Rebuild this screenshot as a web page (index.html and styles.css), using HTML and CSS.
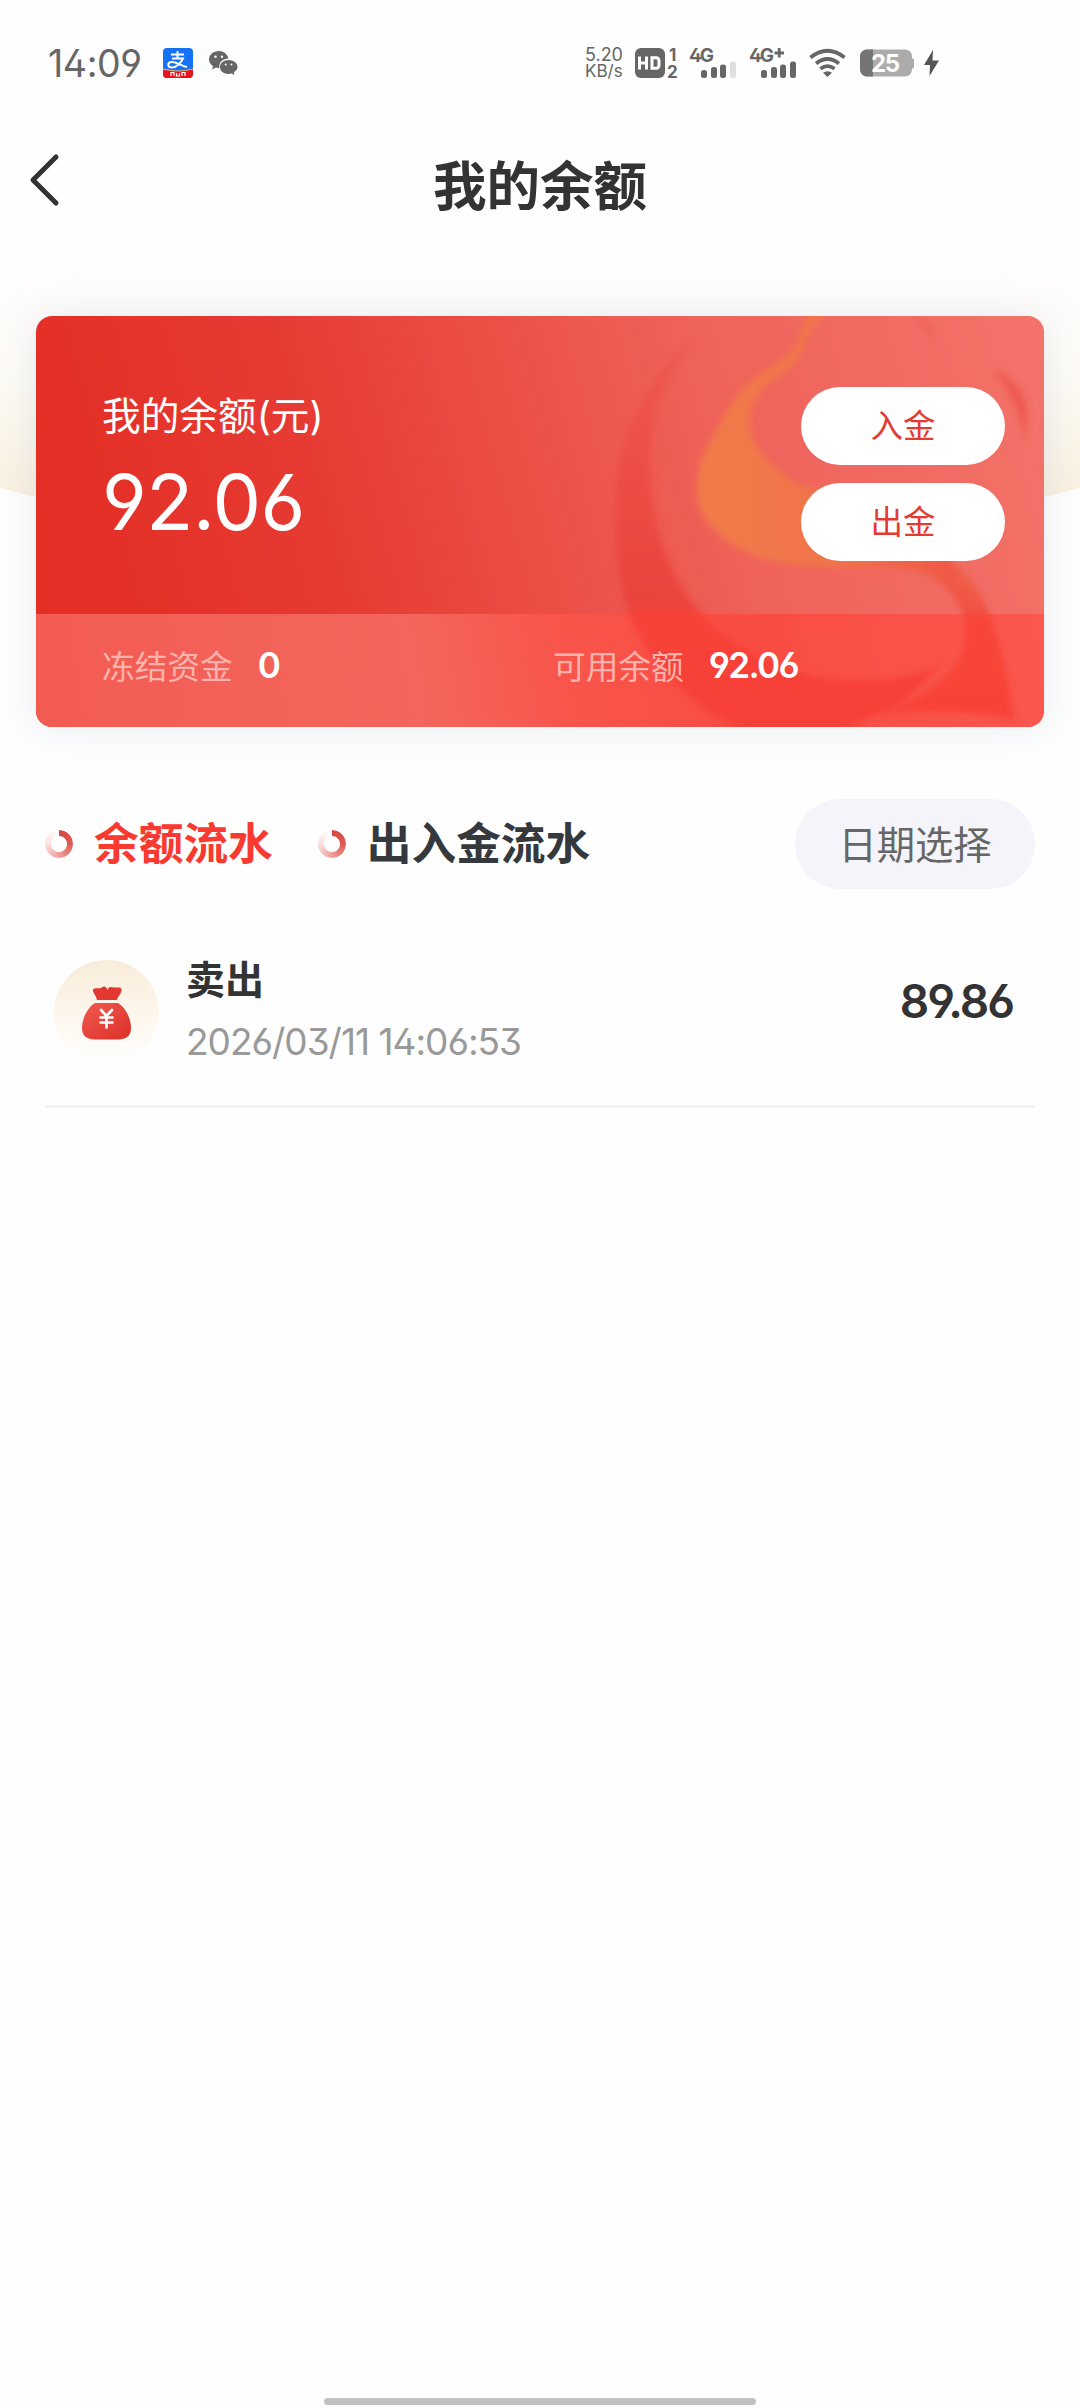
FILE: index.html
```html
<!DOCTYPE html>
<html lang="zh-CN">
<head>
    <meta charset="UTF-8">
    <meta name="viewport" content="width=device-width, initial-scale=1.0">
    <title>我的余额</title>
    <link rel="stylesheet" href="styles.css">
</head>
<body>
<div class="status-bar">
    <span class="clock">14:09</span>
    <svg class="app-pay" width="30" height="30" viewBox="0 0 30 30">
        <rect width="30" height="30" rx="4" fill="#1672f3"/>
        <path d="M0 21Q15 25 30 21V26a4 4 0 0 1-4 4H4a4 4 0 0 1-4-4z" fill="#e8141c"/>
        <path d="M0 21Q15 25 30 21" fill="none" stroke="#f5b06a" stroke-width="1"/>
        <path d="M8 6.500H21M14.500 3V10.500M9 10.500H20C18 15 13 19.500 9 19.500C4 19.500 4 14 9 14C14 14 18 18 24 19" fill="none" stroke="#fff" stroke-width="1.900"/>
        <path d="M8 28v-3.500h3V28M13.500 25v3h3v-3M19 28v-3.500h3V28" fill="none" stroke="#fff" stroke-width="1.200"/>
    </svg>
    <svg class="app-chat" width="29" height="24" viewBox="0 0 29 24">
        <path d="M10 0C4 0 0 3.800 0 8.500c0 2.800 1.500 5 4 6.600L3.200 18.500 7 16.500c1.200.300 2 .400 3.500.400C9.500 11 14 7.500 19.500 7.500 18.500 3 14.500 0 10 0z" fill="#666"/>
        <path d="M19.500 9C14.500 9 11 12 11 16s3.500 7 8.500 7c1 0 2-.200 3-.500l3 1.500-.700-2.800C27 20 28.500 18 28.500 16c0-4-4-7-9-7z" fill="#666"/>
        <g fill="#fff"><circle cx="6.500" cy="5.700" r="1.200"/><circle cx="13" cy="5.700" r="1.200"/><circle cx="16.700" cy="13.500" r="1"/><circle cx="22.500" cy="13.500" r="1"/></g>
    </svg>
    <div class="status-right">
        <div class="speed"><span>5.20</span><span>KB/s</span></div>
        <svg class="hd" width="43" height="30" viewBox="0 0 43 30">
            <rect width="30" height="30" rx="6" fill="#666"/>
            <path d="M4.500 8.500V21.500M11.500 8.500V21.500M4.500 15H11.500M17 9.700H21Q24 9.700 24 13V17Q24 20.300 21 20.300H17Z" fill="none" stroke="#fff" stroke-width="3"/>
            <text x="34" y="12.500" font-size="17">1</text>
            <text x="32" y="30" font-size="17">2</text>
        </svg>
        <svg class="signal" width="49" height="30" viewBox="0 0 49 30">
            <text x="0" y="14" font-size="19" textLength="25">4G</text>
            <rect x="12" y="22" width="6" height="8" rx="2.500"/>
            <rect x="22" y="19" width="6" height="11" rx="2.500"/>
            <rect x="31" y="16.500" width="6" height="13.500" rx="2.500"/>
            <rect x="41" y="13.500" width="6" height="16.500" rx="2.500" opacity=".2"/>
        </svg>
        <svg class="signal signal-plus" width="49" height="30" viewBox="0 0 49 30">
            <text x="0" y="14" font-size="19" textLength="25">4G</text>
            <path d="M25.500 5H35M30.200 0V9.500" stroke="#666" stroke-width="2.800"/>
            <rect x="12" y="22" width="6" height="8" rx="2.500"/>
            <rect x="22" y="19" width="6" height="11" rx="2.500"/>
            <rect x="31" y="16.500" width="6" height="13.500" rx="2.500"/>
            <rect x="41" y="13.500" width="6" height="16.500" rx="2.500"/>
        </svg>
        <svg class="wifi" width="37" height="28" viewBox="0 0 37 28">
            <path d="M1.500 8.500Q18.500-5 35.500 8.500M7 14.500Q18.500 5.500 30 14.500M11.500 19.800Q18.500 14.500 25.500 19.800" fill="none" stroke="#666" stroke-width="3.800"/>
            <path d="M14 23.800Q18.500 20.500 23 23.800L18.500 28z" fill="#666"/>
        </svg>
        <svg class="battery" width="54" height="28" viewBox="0 0 54 28">
            <rect x="0" y="0.500" width="52" height="27" rx="7" fill="#acacac"/>
            <path d="M7 .5H13V27.500H7A7 7 0 0 1 0 20.500V7.500A7 7 0 0 1 7 .5z" fill="#747474"/>
            <rect x="50" y="9.500" width="4" height="10" rx="1.500" fill="#acacac"/>
            <text x="11" y="22.500" font-size="24" textLength="29">25</text>
        </svg>
        <svg class="bolt" width="15" height="26" viewBox="0 0 15 26">
            <path d="M9 0L0 15H6L5.500 26 15 10.500H8.500z" fill="#555"/>
        </svg>
    </div>
</div>

<header class="nav">
    <svg class="back" width="32" height="54" viewBox="0 0 32 54">
        <path d="M27 4L4 27L27 50" fill="none" stroke="#333" stroke-width="5" stroke-linecap="round" stroke-linejoin="round"/>
    </svg>
    <h1>我的余额</h1>
</header>

<main>
    <svg class="arc" width="1080" height="300" viewBox="0 0 1080 300">
        <defs>
            <linearGradient id="cream" x1="0" y1="0" x2="0" y2="1">
                <stop offset="0" stop-color="#fefefe"/>
                <stop offset=".4" stop-color="#fefbf6"/>
                <stop offset="1" stop-color="#f6ead3"/>
            </linearGradient>
        </defs>
        <path d="M0 0H1080V228Q540 370 0 228z" fill="url(#cream)"/>
    </svg>

    <section class="card">
        <svg class="ribbon" width="1008" height="411" viewBox="36 316 1008 411">
            <defs>
                <linearGradient id="crescent" x1="0" y1="330" x2="0" y2="720" gradientUnits="userSpaceOnUse">
                    <stop offset="0" stop-color="#ec4f49" stop-opacity=".3"/>
                    <stop offset=".35" stop-color="#ec4c46" stop-opacity=".85"/>
                    <stop offset=".7" stop-color="#ea423c" stop-opacity=".9"/>
                    <stop offset=".74" stop-color="#f84238"/>
                    <stop offset="1" stop-color="#f64137"/>
                </linearGradient>
                <linearGradient id="tail" x1="0" y1="540" x2="0" y2="727" gradientUnits="userSpaceOnUse">
                    <stop offset="0" stop-color="#f06a49"/>
                    <stop offset=".38" stop-color="#f05244"/>
                    <stop offset=".42" stop-color="#f84539"/>
                    <stop offset="1" stop-color="#f84338"/>
                </linearGradient>
                <linearGradient id="orange" x1="700" y1="0" x2="970" y2="0" gradientUnits="userSpaceOnUse">
                    <stop offset="0" stop-color="#f17a49"/>
                    <stop offset=".5" stop-color="#f07448"/>
                    <stop offset="1" stop-color="#f05245"/>
                </linearGradient>
                <filter id="soft"><feGaussianBlur stdDeviation="3"/></filter>
            </defs>
            <g filter="url(#soft)">
                <path d="M698 333C664 361 640 397 627 434C612 478 612 540 621 585C630 640 680 707 750 732H840L905 700L945 660C925 678 865 687 815 677C760 662 715 636 687 595C659 553 642 490 654 420C660 390 678 360 698 333z" fill="url(#crescent)"/>
                <path d="M815 565H957C975 583 988 603 995 632C1005 663 1011 692 1015 722C990 712 940 708 865 715C930 702 963 670 966 635C965 602 945 575 902 568z" fill="url(#tail)"/>
                <path d="M806 314C801 335 796 350 782 359C745 383 735 393 720 424C704 448 695 470 697 495C700 525 730 550 770 561C810 570 860 567 902 567C930 568 955 580 962 600L950 555L809 487C785 480 767 462 755 443C745 418 751 400 767 385C794 365 797 366 804 345C809 333 815 325 827 314z" fill="url(#orange)"/>
                <path d="M992 368Q1024 382 1027 410L1025 445Q1021 405 992 368z" fill="#ed4e48" opacity=".7"/>
                <path d="M915 317Q930 321 938 341Q927 331 915 317z" fill="#ee574f" opacity=".7"/>
            </g>
        </svg>
        <div class="card-top">
            <div class="balance">
                <div class="label">我的余额(元)</div>
                <div class="amount">92.06</div>
            </div>
            <div class="actions">
                <button type="button">入金</button>
                <button type="button">出金</button>
            </div>
        </div>
        <div class="card-bottom">
            <div class="fund"><span>冻结资金</span><b>0</b></div>
            <div class="fund"><span>可用余额</span><b>92.06</b></div>
        </div>
    </section>

    <div class="tabs">
        <div class="tab active"><i class="ring"></i>余额流水</div>
        <div class="tab"><i class="ring"></i>出入金流水</div>
        <button type="button" class="date-btn">日期选择</button>
    </div>

    <div class="record">
        <div class="record-icon">
            <svg width="50" height="54" viewBox="0 0 50 54">
                <defs>
                    <linearGradient id="bag" x1="0" y1="0" x2="1" y2="1">
                        <stop offset="0" stop-color="#f05a50"/>
                        <stop offset="1" stop-color="#dd2f28"/>
                    </linearGradient>
                </defs>
                <path d="M15 14C14 9 10 6 11 3.500C13 1 17 3 19 2C22-.5 24 0 25.500 4C27 0 29 1 32 1.500C35 2 39 0 39.500 3.500C40 7 36 10 35 14z" fill="#e3372f"/>
                <path d="M13 17H36C44 22 49 33 49 42C49 50 44 53.500 36 53.500H13C5 53.500 0 50 0 42C0 33 5 22 13 17z" fill="url(#bag)"/>
                <path d="M19 24L24.500 30L30 24M24.500 30V41.500M18.500 31.500H30.500M18.500 36.500H30.500" fill="none" stroke="#fff" stroke-width="2.600" stroke-linecap="round"/>
            </svg>
        </div>
        <div class="record-info">
            <div class="record-name">卖出</div>
            <div class="record-time">2026/03/11 14:06:53</div>
        </div>
        <div class="record-amount">89.86</div>
    </div>
</main>

<div class="home-bar"></div>
</body>
</html>
```
FILE: styles.css
```css
* {
    box-sizing: border-box;
}
body {
    margin: 0;
    width: 1080px;
    height: 2408px;
    background: #fefefe;
    font-family: Inter, "Noto Sans CJK SC", sans-serif;
    font-feature-settings: "ss01";
    color: #333;
    display: flex;
    flex-direction: column;
    overflow: hidden;
}
svg {
    display: block;
    flex: none;
    overflow: visible;
}
button {
    border: none;
    padding: 0;
    font-family: inherit;
}

/* status bar */
.status-bar {
    height: 126px;
    padding: 0 141px 0 48px;
    display: flex;
    align-items: center;
    color: #666;
}
.clock {
    width: 115px;
    font-size: 37.5px;
    letter-spacing: -0.4px;
}
.app-pay {
    margin-right: 16px;
}
.status-right {
    margin-left: auto;
    display: flex;
    align-items: center;
}
.status-right text {
    font-weight: 700;
    fill: #666;
}
.status-right .battery text {
    fill: #fff;
}
.speed {
    width: 50px;
    display: flex;
    flex-direction: column;
    font-size: 17px;
    line-height: 17px;
}
.speed span:first-child {
    font-size: 18px;
}
.hd {
    margin-right: 11px;
}
.signal {
    fill: #666;
    margin-right: 11px;
}
.wifi {
    margin-right: 14px;
}
.battery {
    margin-right: 10px;
}

/* title */
.nav {
    height: 134px;
    position: relative;
    display: flex;
    justify-content: center;
}
.back {
    position: absolute;
    left: 29px;
    top: 27px;
}
.nav h1 {
    margin: 22px 0 0;
    font-size: 53.5px;
    line-height: 78px;
    font-weight: 700;
}

main {
    position: relative;
    flex: 1;
    padding-top: 56px;
}
main::before {
    content: "";
    position: absolute;
    z-index: 1;
    left: 36px;
    top: 56px;
    width: 1008px;
    height: 411px;
    border-radius: 16px;
    box-shadow: 0 0 40px rgba(150, 170, 190, 0.22);
}
.arc {
    position: absolute;
    left: 0;
    top: 0;
}

/* balance card */
.card {
    position: relative;
    z-index: 1;
    margin: 0 36px;
    height: 411px;
    border-radius: 16px;
    overflow: hidden;
    background: linear-gradient(75deg, #e42f26 8%, #e63a32 30%, #eb5047 50%, #ef625a 68%, #f3736a 100%);
    color: #fff;
}
.card::before {
    content: "";
    position: absolute;
    left: 0;
    right: 0;
    bottom: 0;
    height: 113px;
    background: linear-gradient(80deg, #f25b52 0%, #f3665d 38%, #f8554b 52%, #f94c42 70%, #fa574e 100%);
}
.ribbon {
    position: absolute;
    left: 0;
    top: 0;
}
.card-top {
    position: relative;
    height: 298px;
    padding: 71px 39px 0 66px;
    display: flex;
    justify-content: space-between;
}
.label {
    margin-top: 1px;
    font-size: 38.7px;
    line-height: 56px;
}
.amount {
    margin-top: 11px;
    font-size: 77px;
    line-height: 94px;
    letter-spacing: -0.5px;
}
.actions {
    display: flex;
    flex-direction: column;
    gap: 18px;
}
.actions button {
    width: 204px;
    height: 78px;
    padding-bottom: 5px;
    border-radius: 39px;
    background: #fff;
    color: #e43a31;
    font-size: 32.5px;
}
.card-bottom {
    position: relative;
    height: 113px;
    padding: 0 66px 11px;
    display: grid;
    grid-template-columns: 451px 1fr;
    align-items: center;
}
.fund {
    display: flex;
    align-items: center;
    gap: 25px;
    font-size: 32.7px;
}
.fund span {
    margin-top: -2px;
    color: #ffb3ac;
}
.fund b {
    font-size: 35px;
    font-weight: 600;
    letter-spacing: -1.6px;
}

/* tabs */
.tabs {
    position: relative;
    margin: 72px 45px 0;
    height: 90px;
    display: flex;
    align-items: center;
}
.tab {
    display: flex;
    align-items: center;
    margin-right: 45px;
    font-size: 44.7px;
    font-weight: 700;
    line-height: 64px;
    color: #35383c;
}
.tab.active {
    color: #f93a30;
}
.ring {
    width: 28px;
    height: 28px;
    margin-right: 21px;
    border-radius: 50%;
    background: conic-gradient(#d94740 0deg, #e05a54 90deg, #f0a09c 180deg, #fbe0de 270deg, #fff 350deg, #fff 360deg);
    -webkit-mask: radial-gradient(circle, transparent 7.5px, #000 8.5px);
    mask: radial-gradient(circle, transparent 7.5px, #000 8.5px);
}
.date-btn {
    margin-left: auto;
    width: 240px;
    height: 90px;
    padding-bottom: 4px;
    border-radius: 45px;
    background: #f4f4fa;
    color: #666;
    font-size: 38.3px;
}

/* record list */
.record {
    margin: 0 45px;
    height: 219px;
    padding: 71px 20px 0 9px;
    border-bottom: 3px solid #f3f3f3;
    display: flex;
}
.record-icon {
    width: 105px;
    height: 105px;
    border-radius: 50%;
    background: linear-gradient(#f8ecd9, #fdf6ec 50%, #fefefe 95%);
    display: flex;
    align-items: center;
    justify-content: center;
}
.record-info {
    margin: -8px 0 0 27px;
}
.record-name {
    font-size: 39px;
    font-weight: 700;
    line-height: 56px;
}
.record-time {
    margin-top: 11px;
    font-size: 37px;
    line-height: 46px;
    letter-spacing: -1px;
    color: #999;
}
.record-amount {
    margin: 12px 2px 0 auto;
    font-size: 46px;
    font-weight: 600;
    line-height: 58px;
    letter-spacing: -2px;
}

.home-bar {
    width: 432px;
    height: 7px;
    margin: 0 auto 3px;
    border-radius: 4px;
    background: #c2c2c2;
}
```
